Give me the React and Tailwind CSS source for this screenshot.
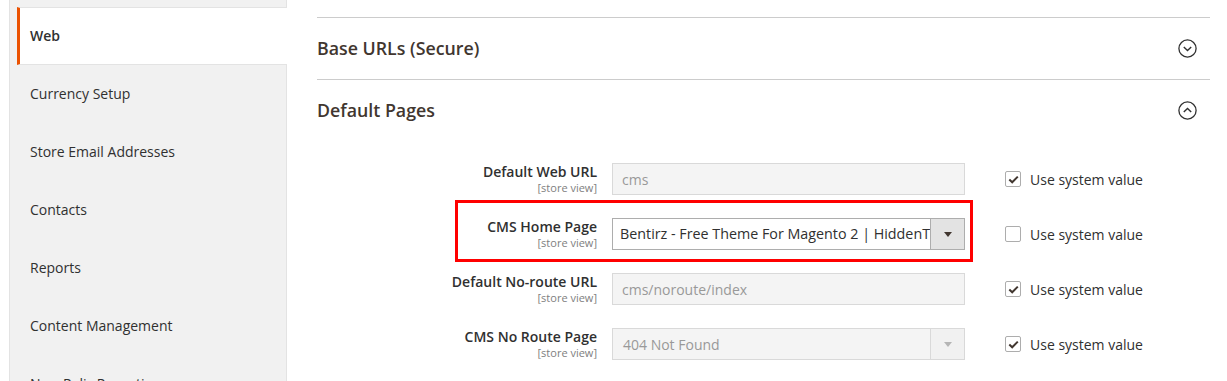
import React from "react";

const navItems = [
  "Web",
  "Currency Setup",
  "Store Email Addresses",
  "Contacts",
  "Reports",
  "Content Management",
  "New Relic Reporting",
];

function CircleChevron({ up }) {
  return (
    <svg width="19" height="19" viewBox="0 0 19 19" fill="none">
      <circle cx="9.5" cy="9.5" r="8.6" stroke="#303030" strokeWidth="1.3" />
      {up ? (
        <path d="M5.8 11 L9.5 7.4 L13.2 11" stroke="#303030" strokeWidth="1.4" />
      ) : (
        <path d="M5.8 8 L9.5 11.6 L13.2 8" stroke="#303030" strokeWidth="1.4" />
      )}
    </svg>
  );
}

function Checkbox({ checked }) {
  return (
    <span className="w-[16px] h-[16px] border border-[#adadad] rounded-[2px] bg-white flex items-center justify-center">
      {checked && (
        <svg width="11" height="9" viewBox="0 0 11 9">
          <path d="M1.3 4.6 L4.2 7.3 L9.8 1.6" stroke="#41362f" strokeWidth="2" fill="none" />
        </svg>
      )}
    </span>
  );
}

function Label({ text }) {
  return (
    <div className="w-[280px] shrink-0 text-right">
      <div className="text-[14px] leading-[18px] font-semibold text-[#303030]">{text}</div>
      <div className="text-[11px] leading-[13px] text-[#808080]">[store view]</div>
    </div>
  );
}

function InputField({ value }) {
  return (
    <div className="w-[353px] h-[32px] border border-[#d9d9d9] bg-[#f4f4f4] flex items-center px-[9px] text-[14px] text-[#999999]">
      {value}
    </div>
  );
}

function SelectField({ value, disabled }) {
  return (
    <div
      className={
        disabled
          ? "w-[353px] h-[32px] border border-[#d9d9d9] bg-[#f4f4f4] flex"
          : "w-[353px] h-[32px] border border-[#adadad] bg-white flex"
      }
    >
      <div
        className={
          disabled
            ? "flex-1 overflow-hidden whitespace-nowrap px-[10px] flex items-center text-[14px] text-[#999999]"
            : "flex-1 overflow-hidden whitespace-nowrap px-[7px] flex items-center text-[14.3px] text-[#303030]"
        }
      >
        {value}
      </div>
      <div
        className={
          disabled
            ? "w-[34px] border-l border-[#d9d9d9] bg-[#f1f1f1] flex items-center justify-center"
            : "w-[34px] border-l border-[#adadad] bg-[#e3e3e3] flex items-center justify-center"
        }
      >
        <span
          className={
            disabled
              ? "w-0 h-0 border-l-[4px] border-r-[4px] border-t-[5px] border-l-transparent border-r-transparent border-t-[#b5b5b5]"
              : "w-0 h-0 border-l-[4px] border-r-[4px] border-t-[5px] border-l-transparent border-r-transparent border-t-[#41362f]"
          }
        />
      </div>
    </div>
  );
}

function Row({ label, field, checked, highlight }) {
  return (
    <div className="relative flex items-start h-[32px]">
      <Label text={label} />
      <div className="ml-[15px]">{field}</div>
      <div className="ml-[40px] h-[32px] flex items-center gap-[9px]">
        <Checkbox checked={checked} />
        <span className="text-[14px] text-[#303030]">Use system value</span>
      </div>
      {highlight && (
        <div className="absolute left-[138px] top-[-18px] w-[518px] h-[62px] border-[3px] border-[#ff0000] pointer-events-none" />
      )}
    </div>
  );
}

export default function App() {
  return (
    <div
      className="w-[1227px] h-[381px] overflow-hidden flex bg-white"
      style={{ fontFamily: '"Open Sans", "Noto Sans", sans-serif' }}
    >
      <div className="w-[287px] shrink-0 pl-[9px]">
        <div className="h-[420px] bg-[#f1f1f1] border-l border-r border-[#e3e3e3] pt-[7px]">
          {navItems.map((item, i) =>
            i === 0 ? (
              <div
                key={item}
                className="relative ml-[7px] -mr-px h-[58px] bg-white border-l-[3px] border-l-[#eb5202] border-y border-y-[#e3e3e3] pl-[10px] pb-[2px] flex items-center text-[14px] font-semibold text-[#303030]"
              >
                {item}
              </div>
            ) : (
              <div
                key={item}
                className="ml-[7px] h-[58px] border-l-[3px] border-l-transparent pl-[10px] pb-[2px] flex items-center text-[14px] text-[#303030]"
              >
                {item}
              </div>
            )
          )}
        </div>
      </div>

      <div className="flex-1 pl-[30px] pr-[17px]">
        <div className="mt-[17px] border-t border-b border-[#cccccc] h-[63px] flex items-center justify-between pr-[13px]">
          <span className="text-[17.8px] font-semibold text-[#41362f]">Base URLs (Secure)</span>
          <CircleChevron />
        </div>
        <div className="h-[62px] pb-[2px] flex items-center justify-between pr-[13px]">
          <span className="text-[17.8px] font-semibold text-[#41362f]">Default Pages</span>
          <CircleChevron up />
        </div>

        <div className="mt-[21px] flex flex-col gap-[23px]">
          <Row label="Default Web URL" field={<InputField value="cms" />} checked />
          <Row
            label="CMS Home Page"
            field={<SelectField value="Bentirz - Free Theme For Magento 2 | HiddenTechies" />}
            highlight
          />
          <Row label="Default No-route URL" field={<InputField value="cms/noroute/index" />} checked />
          <Row label="CMS No Route Page" field={<SelectField value="404 Not Found" disabled />} checked />
        </div>
      </div>
    </div>
  );
}
